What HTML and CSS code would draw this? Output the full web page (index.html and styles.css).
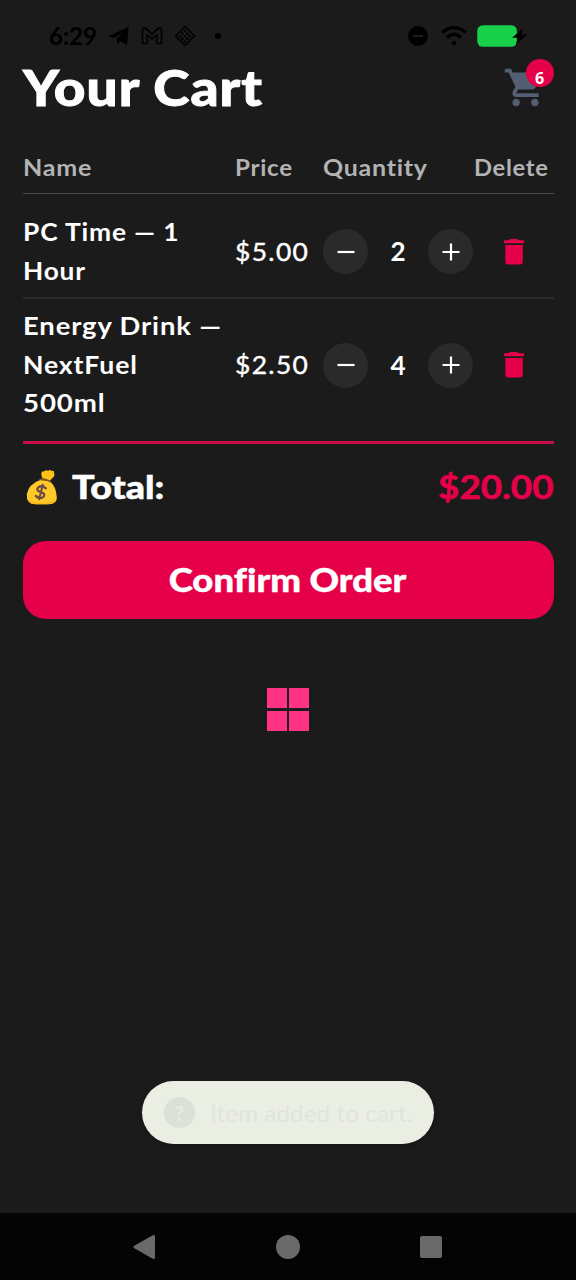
FILE: index.html
```html
<!DOCTYPE html>
<html lang="en">
<head>
<meta charset="utf-8">
<title>Your Cart</title>
<link rel="stylesheet" href="styles.css">
</head>
<body>
<div class="screen">
  <header class="status">
    <div class="status-left">
      <span class="clock">6:29</span>
      <svg class="i-telegram" width="22" height="20" viewBox="0 0 22 20"><path d="M.5 10.2 20.6.8 19 18.7 11.8 14.8 9.8 18.6 8.6 12.6 16 6.2 6.3 12z"/></svg>
      <svg class="i-mail" width="22" height="18" viewBox="0 0 22 18"><path d="M1.5 2.5Q1.5 1 3 1L4.5 1.3 11 6.8 17.5 1.3 19 1Q20.5 1 20.5 2.5V16.5H15.7V8.2L11 12 6.3 8.2V16.5H1.5z" fill="none" stroke="#000" stroke-width="1.7"/></svg>
      <svg class="i-diamond" width="22" height="22" viewBox="0 0 22 22"><path d="M11 1.5 20.5 11 11 20.5 1.5 11z" fill="none" stroke="#000" stroke-width="1.5" stroke-linejoin="round"/><g><circle cx="11" cy="6" r="1.3"/><circle cx="8" cy="8.5" r="1.3"/><circle cx="13.5" cy="8.7" r="1.3"/><circle cx="6" cy="11.5" r="1.3"/><circle cx="10.8" cy="11.3" r="1.3"/><circle cx="15.8" cy="11.3" r="1.3"/><circle cx="8.4" cy="14" r="1.3"/><circle cx="13.3" cy="13.8" r="1.3"/><circle cx="11" cy="16.5" r="1.3"/></g></svg>
      <span class="dot"></span>
    </div>
    <div class="status-right">
      <svg width="20" height="20" viewBox="0 0 20 20"><circle cx="10" cy="10" r="10"/><path d="M5 10h10" stroke="#242424" stroke-width="1.7"/></svg>
      <svg class="i-wifi" width="26" height="20" viewBox="0 0 26 20"><path d="M1.3 6.5Q13-3.5 24.7 6.5M6 11.4Q13 5.3 20 11.4" fill="none" stroke="#000" stroke-width="3.4"/><circle cx="13" cy="17" r="2.3"/></svg>
      <svg class="i-battery" width="51" height="22" viewBox="0 0 51 22"><rect x=".3" y=".2" width="39.6" height="21.6" rx="5.5" fill="#19d04b"/><path d="M45.5 3.7 35 12.7h5.8L39 19 50.5 9.6h-5.8z"/></svg>
    </div>
  </header>

  <main class="content">
    <div class="title-bar">
      <h1 class="title">Your Cart</h1>
      <div class="cart">
        <svg width="45" height="45" viewBox="0 0 24 24" fill="#535e73"><path d="M7 18c-1.100 0-1.990.9-1.990 2S5.900 22 7 22s2-.9 2-2-.9-2-2-2zM1 2v2h2l3.600 7.590-1.350 2.450c-.16.280-.25.610-.25.960 0 1.100.9 2 2 2h12v-2H7.420c-.14 0-.25-.110-.25-.25l.03-.120.9-1.630h7.450c.75 0 1.410-.410 1.750-1.030l3.580-6.490A1 1 0 0 0 20 4H5.210l-.94-2H1zm16 16c-1.100 0-1.990.9-1.990 2s.89 2 1.990 2 2-.9 2-2-.9-2-2-2z"/></svg>
        <span class="badge">6</span>
      </div>
    </div>

    <section class="table">
      <div class="row head">
        <span class="h-name">Name</span><span class="h-price">Price</span><span class="h-qty">Quantity</span><span class="h-delete">Delete</span>
      </div>
      <div class="row item first">
        <div class="name"><span class="n1">PC Time — 1</span><br><span class="n2">Hour</span></div>
        <div class="price">$5.00</div>
        <div class="stepper">
          <span class="round"><svg width="18" height="18" viewBox="0 0 18 18"><path d="M.5 9h17"/></svg></span>
          <span class="count">2</span>
          <span class="round"><svg width="18" height="18" viewBox="0 0 18 18"><path d="M.5 9h17M9 .5v17"/></svg></span>
        </div>
        <svg class="trash" width="20" height="26" viewBox="0 0 20 26"><path d="M0 1.300H5L6 0H13.500L14.600 1.300H20V4.200H0zM1.300 6H18.800V22.500Q18.800 25.500 16 25.500H4Q1.300 25.500 1.300 22.500z"/></svg>
      </div>
      <div class="row item">
        <div class="name"><span class="n3">Energy Drink —</span><br><span class="n4">NextFuel</span><br><span class="n5">500ml</span></div>
        <div class="price">$2.50</div>
        <div class="stepper">
          <span class="round"><svg width="18" height="18" viewBox="0 0 18 18"><path d="M.5 9h17"/></svg></span>
          <span class="count">4</span>
          <span class="round"><svg width="18" height="18" viewBox="0 0 18 18"><path d="M.5 9h17M9 .5v17"/></svg></span>
        </div>
        <svg class="trash" width="20" height="26" viewBox="0 0 20 26"><path d="M0 1.300H5L6 0H13.500L14.600 1.300H20V4.200H0zM1.300 6H18.800V22.500Q18.800 25.500 16 25.500H4Q1.300 25.500 1.300 22.500z"/></svg>
      </div>
    </section>

    <section class="total">
      <svg class="bag" width="32" height="35" viewBox="0 0 32 35"><path d="M16 8 15.200 3.500Q16 .8 18 1.500 20-.8 22 1 24-1 25.500 1 28.500 0 28 3 29.500 6 26 8.500L23.500 11z" fill="#fcc21b"/><path d="M14 10Q3 14 .8 24 0 34.500 10 34.300H22Q31.500 34.500 30.800 27 30 16 23.500 11z" fill="#ffca28"/><path d="M2 29Q7 33.500 16 33 25 33 30 29 29 34.300 22 34.300H10Q4 34.300 2 29z" fill="#f9b91c"/><path d="M14 9.500Q19 8 24 11.500" fill="none" stroke="#805426" stroke-width="1.800" stroke-linecap="round"/><g fill="none" stroke="#6d4c41" stroke-width="2.300" stroke-linecap="round"><path d="M19.800 18.300Q16 14.800 12.400 17.300 9.500 20.500 14.500 22 20 23.500 17.500 26.800 14 29.500 9.800 26"/><path d="M16.800 14.600 13.200 29.200" stroke-width="2"/></g></svg>
      <span class="total-label">Total:</span>
      <span class="total-value">$20.00</span>
    </section>

    <div class="confirm"><span>Confirm Order</span></div>
    <div class="tiles"><i></i><i></i><i></i><i></i></div>
  </main>

  <div class="toast">
    <span class="toast-icon">?</span>
    <span class="toast-text">Item added to cart.</span>
  </div>

  <nav class="nav">
    <svg width="23" height="26" viewBox="0 0 23 26"><path d="M2 13 20.500 2.500V23.500z" stroke="#696969" stroke-width="3" stroke-linejoin="round"/></svg>
    <svg width="24" height="24" viewBox="0 0 24 24"><circle cx="12" cy="12" r="12"/></svg>
    <svg width="22" height="22" viewBox="0 0 22 22"><rect width="22" height="22" rx="2"/></svg>
  </nav>
</div>
</body>
</html>
```

FILE: styles.css
```css
* { box-sizing: border-box; }
body { margin: 0; background: #1b1b1b; font-family: Lato, "Open Sans", sans-serif; font-variant-ligatures: none; color: #fff; }
svg { display: block; flex: none; }
.screen { width: 576px; height: 1280px; display: flex; flex-direction: column; overflow: hidden; white-space: nowrap; }

.status { height: 60px; padding: 12px 48px 0 49px; display: flex; justify-content: space-between; align-items: center; color: #000; }
.status-left, .status-right { display: flex; align-items: center; }
.clock { width: 59px; font-size: 24px; font-weight: 700; line-height: 24px; }
.i-mail { margin-left: 11px; }
.i-diamond { margin-left: 11px; }
.dot { width: 6px; height: 6px; border-radius: 50%; background: #000; margin-left: 19px; }
.i-wifi { margin-left: 13px; }
.i-battery { margin-left: 10px; }

.content { padding: 0 22.5px; flex: 1; }
.title-bar { height: 82px; display: flex; justify-content: space-between; align-items: flex-start; }
.title { margin: -1px 0 0; font-size: 49px; line-height: 56px; font-weight: 900; letter-spacing: .9px; -webkit-text-stroke: .9px #fff; transform: scaleX(1.12); transform-origin: left; }
.cart { position: relative; width: 51px; height: 56px; padding-top: 5px; }
.badge { position: absolute; right: 0; top: -1px; width: 28px; height: 28px; border-radius: 50%; background: #e60049; font: 700 16px/39px "Open Sans", sans-serif; text-align: center; }

.row { display: grid; grid-template-columns: 212px 88.5px 151px 1fr; align-items: center; }
.head { height: 52px; padding-bottom: 2px; border-bottom: 1.5px solid #4a4a4a; color: #b3b3b3; font-size: 23px; font-weight: 700; letter-spacing: .7px; }
.head span, .name span { display: inline-block; justify-self: start; transform-origin: left; }
.h-name { transform: scaleX(1.09); }
.h-price { transform: scaleX(1.05); }
.h-qty { transform: scaleX(1.085); }
.h-delete { transform: scaleX(1.03); }
.item { height: 132px; font-size: 25px; line-height: 38.4px; }
.item.first { height: 93px; margin-top: 12px; border-bottom: 2px solid #2b2b2b; }
.name { font-weight: 700; letter-spacing: .8px; margin-top: -2px; }
.n1 { transform: scaleX(1.055); }
.n2 { transform: scaleX(1.05); }
.n3 { transform: scaleX(1.095); }
.n4 { transform: scaleX(1.065); }
.n5 { transform: scaleX(1.105); }
.price { letter-spacing: 1.3px; font-size: 25px; margin-top: -1px; -webkit-text-stroke: .4px #fff; transform: scaleX(1.055); transform-origin: left; }
.stepper { display: flex; align-items: center; }
.round { width: 45px; height: 45px; border-radius: 50%; background: #2a2a2a; display: grid; place-items: center; }
.round path { stroke: #fff; stroke-width: 2.2; }
.count { width: 60px; text-align: center; font-weight: 700; font-size: 26px; }
.trash { margin-left: 29.5px; fill: #e60049; }

.total { margin-top: 10px; border-top: 3px solid #c80c46; height: 100px; padding-bottom: 11px; display: flex; align-items: center; font-size: 33px; line-height: 38px; font-weight: 900; }
.bag { margin-left: 3px; }
.total-label { margin: -2px 0 0 14px; -webkit-text-stroke: .5px #fff; transform: scaleX(1.14); transform-origin: left; }
.total-value { margin: -2px 0 0 auto; font-weight: 700; color: #e60049; -webkit-text-stroke: .6px #e60049; transform: scaleX(1.115); transform-origin: right; }
.confirm { height: 78px; border-radius: 23px; background: #e60049; display: grid; place-items: center; font-size: 33px; font-weight: 900; padding-bottom: 2px; }
.confirm span { -webkit-text-stroke: .4px #fff; transform: scaleX(1.105); }
.tiles { width: 42.5px; height: 42.5px; margin: 69px auto 0; display: grid; grid-template-columns: 1fr 1fr; gap: 2.5px; }
.tiles i { background: #ff3385; }

.toast { width: 292px; height: 63px; margin: 0 auto 69px; padding: 0 22px; border-radius: 32px; background: #ebefe3; display: flex; align-items: center; box-shadow: 0 2px 5px #0004; color: #e0e4dc; }
.toast-icon { width: 31px; height: 31px; border-radius: 50%; background: #dce0d7; color: #e7ebe1; display: grid; place-items: center; font-size: 20px; font-weight: 900; }
.toast-text { margin: 0 0 0 15px; font-size: 23px; transform: scaleX(1.06); transform-origin: left; }
.nav { height: 67px; background: #040404; padding: 0 134px 0 133px; display: flex; align-items: center; justify-content: space-between; fill: #696969; }
```
